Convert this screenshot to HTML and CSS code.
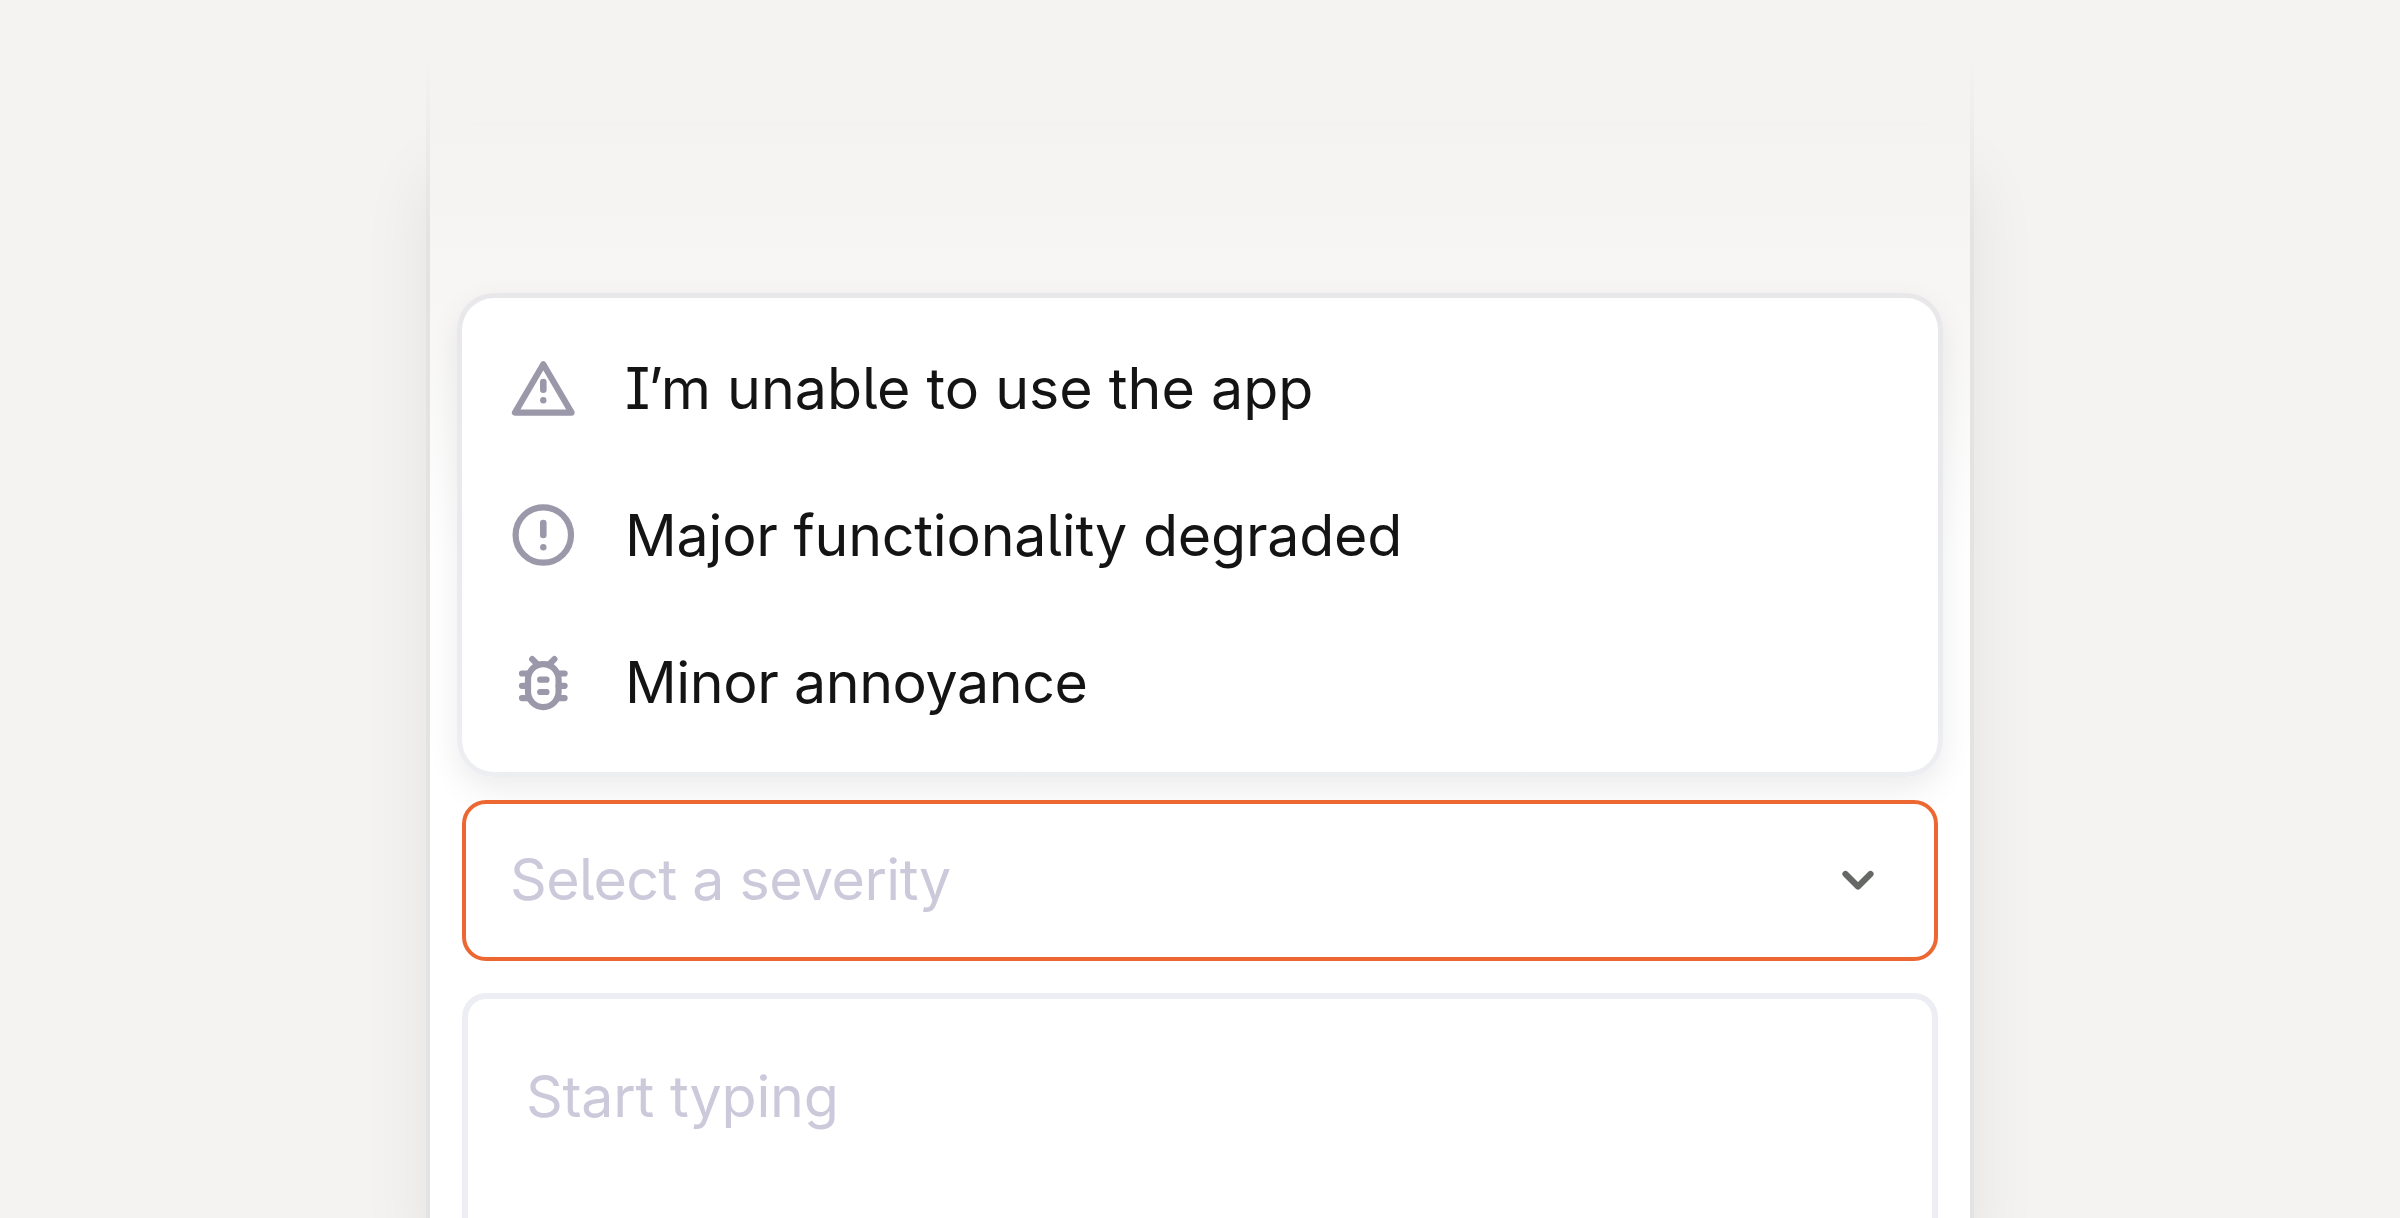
FILE: index.html
```
<!DOCTYPE html>
<html lang="en">
<head>
<meta charset="utf-8">
<title>Report an issue</title>
<link rel="stylesheet" href="styles.css">
</head>
<body>
<main class="panel">
  <ul class="menu">
    <li class="option">
      <svg class="icon" viewBox="0 0 74 74" aria-hidden="true">
        <path class="line" d="M37.3 12.2L9 60.600H65.600z"/>
        <path class="mark" d="M37.3 30.100v7.600"/>
        <circle class="dot" cx="37.3" cy="48.3" r="3.2"/>
      </svg>
      <span class="wide"><span class="contraction">I’</span>m unable to use the app</span>
    </li>
    <li class="option">
      <svg class="icon" viewBox="0 0 74 74" aria-hidden="true">
        <circle class="line" cx="37.3" cy="36" r="27.7"/>
        <path class="mark" d="M37.3 24.1v11.9"/>
        <circle class="dot" cx="37.3" cy="48.3" r="3.2"/>
      </svg>
      <span class="normal">Major functionality degraded</span>
    </li>
    <li class="option">
      <svg class="icon" viewBox="0 0 74 74" aria-hidden="true">
        <rect class="line" x="22" y="18.1" width="30.6" height="43" rx="15.3"/>
        <path class="line" d="M26.2 13.1l5.6 5.6M48.4 13.1l-5.6 5.6M16 27.500h7M58.600 27.500h-7M16 39.800h6M58.600 39.800h-6M16 52.100h7M58.600 52.100h-7M34.200 33.700h6.300M34.200 46h6.300"/>
      </svg>
      <span class="tight">Minor annoyance</span>
    </li>
  </ul>
  <div class="select">
    <span class="tighter">Select a severity</span>
    <svg class="chevron" viewBox="0 0 40 40" aria-hidden="true">
      <path d="M7.5 14L20 26.500L32.500 14"/>
    </svg>
  </div>
  <div class="textarea"><span class="normal">Start typing</span></div>
</main>
</body>
</html>
```
FILE: styles.css
```
* {
  box-sizing: border-box;
}

body {
  margin: 0;
  height: 1218px;
  overflow: hidden;
  background: #f4f3f1;
  color: #141414;
  font: 400 57.3px/70px Inter, sans-serif;
  font-feature-settings: "cv05", "cv08";
}

.panel {
  position: relative;
  isolation: isolate;
  display: flex;
  flex-direction: column;
  width: 1548px;
  height: 1218px;
  margin: 0 auto;
  padding: 293px 27px 0;
  border: solid;
  border-width: 0 4px;
  border-image: linear-gradient(rgba(228, 227, 225, 0) 60px, #e4e3e1 240px, #e3e3e4) 1;
  background: linear-gradient(#f4f3f1 130px, #f7f6f5 290px, #fff 560px) padding-box;
}

/* Side shadow that starts below the faded top edge */
.panel::before {
  content: "";
  position: absolute;
  z-index: -1;
  inset: 125px -4px 0;
  box-shadow: 0 50px 64px rgba(40, 20, 50, 0.07);
}

.menu {
  display: flex;
  flex-direction: column;
  gap: 73px;
  height: 484px;
  margin: 0 0 23px;
  padding: 54px 44px;
  list-style: none;
  border: 5px solid transparent;
  border-radius: 37px;
  background:
    linear-gradient(#fff, #fff) padding-box,
    linear-gradient(#e8e8eb, #e9eaed 50%, #edeef2) border-box;
  box-shadow: 0 12px 32px rgba(0, 0, 0, 0.08);
}

.option {
  display: flex;
  align-items: center;
  gap: 45px;
  height: 74px;
}

.option > span {
  margin-top: -3px;
}

.icon {
  width: 74px;
  height: 74px;
}

.wide {
  letter-spacing: 0;
}

.contraction {
  letter-spacing: -2.2px;
}

.normal {
  letter-spacing: -0.22px;
}

.tight {
  letter-spacing: -0.42px;
}

.tighter {
  margin-top: -3px;
  letter-spacing: -0.54px;
}

.line,
.mark,
.chevron path {
  fill: none;
  stroke: #9a98a9;
  stroke-width: 6.2;
  stroke-linecap: round;
  stroke-linejoin: round;
}

.mark {
  stroke-width: 6.6;
}

.dot {
  fill: #9a98a9;
}

.select {
  display: flex;
  align-items: center;
  justify-content: space-between;
  height: 160.5px;
  margin: 0 5px 32px;
  padding: 0 56px 0 44px;
  border: 4px solid #ed6733;
  border-radius: 24px;
  background: #fff;
  color: #cbc9da;
}

.chevron {
  width: 40px;
  height: 40px;
}

.chevron path {
  stroke: #666866;
}

.textarea {
  flex: 1;
  margin: 0 5px;
  padding: 62px 58px 0;
  border: 6px solid #edeef3;
  border-bottom: 0;
  border-radius: 24px 24px 0 0;
  background: #fff;
  color: #cbc9da;
}
```
